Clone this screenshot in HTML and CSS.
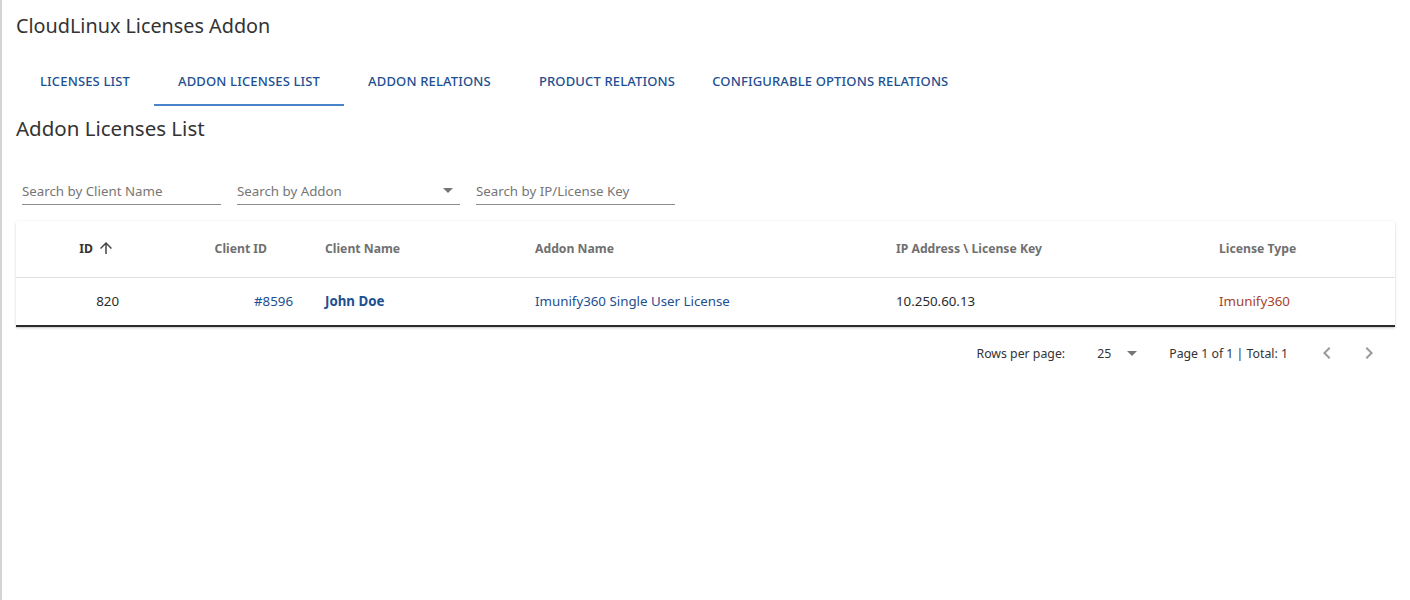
FILE: index.html
```html
<!DOCTYPE html>
<html>
	<head>
		<meta charset="utf-8">
		<title>CloudLinux Licenses Addon</title>
		<link rel="stylesheet" href="styles.css">
	</head>
	<body>
		<h1 class="title">CloudLinux Licenses Addon</h1>
		<div class="tabs">
			<a class="tab">Licenses List</a>
			<a class="tab active">Addon Licenses List</a>
			<a class="tab">Addon Relations</a>
			<a class="tab">Product Relations</a>
			<a class="tab last">Configurable Options Relations</a>
		</div>
		<h2 class="subtitle">Addon Licenses List</h2>
		<div class="filters">
			<div class="field f1"><input type="text" placeholder="Search by Client Name"></div>
			<div class="field f2 select">
				<span class="ph">Search by Addon</span>
				<svg class="caret" width="24" height="24" viewBox="0 0 24 24"><path d="M7 10l5 5 5-5z"/></svg>
			</div>
			<div class="field f3"><input type="text" placeholder="Search by IP/License Key"></div>
		</div>
		<div class="card">
			<table>
				<thead>
					<tr>
						<th class="c1 right sorted">ID<svg class="sort" width="18" height="18" viewBox="0 0 24 24"><path d="M4 12l1.41 1.41L11 7.83V20h2V7.83l5.58 5.59L20 12l-8-8-8 8z"/></svg></th>
						<th class="c2 right">Client ID<svg class="sort hidden" width="18" height="18" viewBox="0 0 24 24"></svg></th>
						<th class="c3">Client Name</th>
						<th class="c4">Addon Name</th>
						<th class="c5">IP Address \ License Key</th>
						<th class="c6">License Type</th>
					</tr>
				</thead>
				<tbody>
					<tr>
						<td class="right">820</td>
						<td class="right"><a class="link">#8596</a></td>
						<td><a class="link bold">John Doe</a></td>
						<td><a class="link">Imunify360 Single User License</a></td>
						<td>10.250.60.13</td>
						<td class="type">Imunify360</td>
					</tr>
				</tbody>
			</table>
		</div>
		<div class="pager">
			<span class="rows-label">Rows per page:</span>
			<span class="rows-select">25<svg class="caret" width="24" height="24" viewBox="0 0 24 24"><path d="M7 10l5 5 5-5z"/></svg></span>
			<span class="info">Page 1 of 1 | Total: 1</span>
			<span class="nav">
				<svg width="24" height="24" viewBox="0 0 24 24"><path d="M15.41 7.41L14 6l-6 6 6 6 1.41-1.41L10.83 12z"/></svg>
				<svg width="24" height="24" viewBox="0 0 24 24"><path d="M10 6L8.59 7.41 13.17 12l-4.58 4.59L10 18l6-6z"/></svg>
			</span>
		</div>
	</body>
</html>
```

FILE: styles.css
```css
html {
	background: #fff;
}

body {
	margin: 0;
	min-height: 600px;
	padding: 0 15px 0 16px;
	border-left: 2px solid #d4d4d4;
	box-sizing: border-box;
	font-family: "Noto Sans", "Open Sans", sans-serif;
	color: #333;
}

.title {
	margin: 0;
	padding-top: 13px;
	font-size: 19.8px;
	font-weight: 400;
	line-height: 26px;
	color: #333;
	margin-left: -2px;
}

.tabs {
	display: flex;
	margin-top: 19px;
	margin-left: -2px;
}

.tab {
	height: 48px;
	padding: 0 24px;
	display: flex;
	align-items: center;
	justify-content: center;
	font-size: 13px;
	font-weight: 500;
	letter-spacing: 0.15px;
	text-transform: uppercase;
	color: #1d4f91;
	white-space: nowrap;
	border-bottom: 2px solid transparent;
	box-sizing: border-box;
}

.tab.last {
	padding: 0 13px;
}

.tab.active {
	border-bottom-color: #4a85cc;
}

.subtitle {
	margin: 9px 0 0 -2px;
	font-size: 20.5px;
	font-weight: 400;
	line-height: 26px;
	color: #333;
}

.filters {
	display: flex;
	gap: 16px;
	margin: 36px 0 0 4px;
}

.field {
	height: 28px;
	border-bottom: 1px solid #8c8c8c;
	display: flex;
	align-items: center;
	box-sizing: border-box;
	position: relative;
}

.f1, .f3 {
	width: 199px;
}

.f2 {
	width: 223px;
}

.field input {
	border: 0;
	outline: 0;
	padding: 0;
	width: 100%;
	font-family: inherit;
	font-size: 13.3px;
	color: #333;
	background: transparent;
}

.field input::placeholder, .ph {
	color: #767676;
	font-size: 13.3px;
}

.select .caret {
	position: absolute;
	right: 0;
	top: 1px;
	fill: #757575;
}

.card {
	margin: 16px 0 0 -2px;
	background: #fff;
	border-bottom: 2px solid #2b2b2b;
	box-shadow: 0 1px 3px rgba(0, 0, 0, 0.18), 0 1px 1px rgba(0, 0, 0, 0.06);
	border-radius: 3px 3px 0 0;
}

table {
	width: 100%;
	border-collapse: collapse;
	table-layout: fixed;
}

th, td {
	padding: 0 16px 2px;
	text-align: left;
	white-space: nowrap;
}

th {
	height: 54px;
	font-size: 12.2px;
	font-weight: 700;
	color: #707070;
	border-bottom: 1px solid #e0e0e0;
}

td {
	height: 45px;
	font-size: 13.3px;
	color: #2b2b2b;
}

.right {
	text-align: right;
}

.c1 { width: 87px; }
.c2 { width: 142px; }
.c3 { width: 178px; }
.c4 { width: 329px; }
.c5 { width: 291px; }

th.sorted {
	color: #333;
}

.sort {
	display: inline-block;
	width: 18px;
	height: 18px;
	margin: 0 4px;
	vertical-align: -4px;
	fill: #444;
}

.sort.hidden {
	visibility: hidden;
}

.link {
	color: #1d4f91;
	text-decoration: none;
}

.bold {
	font-weight: 700;
}

.type {
	color: #a4442d;
}

.pager {
	display: flex;
	justify-content: flex-end;
	align-items: center;
	height: 52px;
	font-size: 12.3px;
	color: #333;
	margin-right: 14px;
}

.rows-label {
	margin-right: 32px;
}

.rows-select {
	display: flex;
	align-items: center;
	gap: 9px;
	margin-right: 25px;
}

.rows-select .caret {
	fill: #757575;
}

.info {
	margin-right: 27px;
}

.nav {
	display: flex;
	gap: 18px;
}

.nav svg {
	fill: #9a9a9a;
}
```
